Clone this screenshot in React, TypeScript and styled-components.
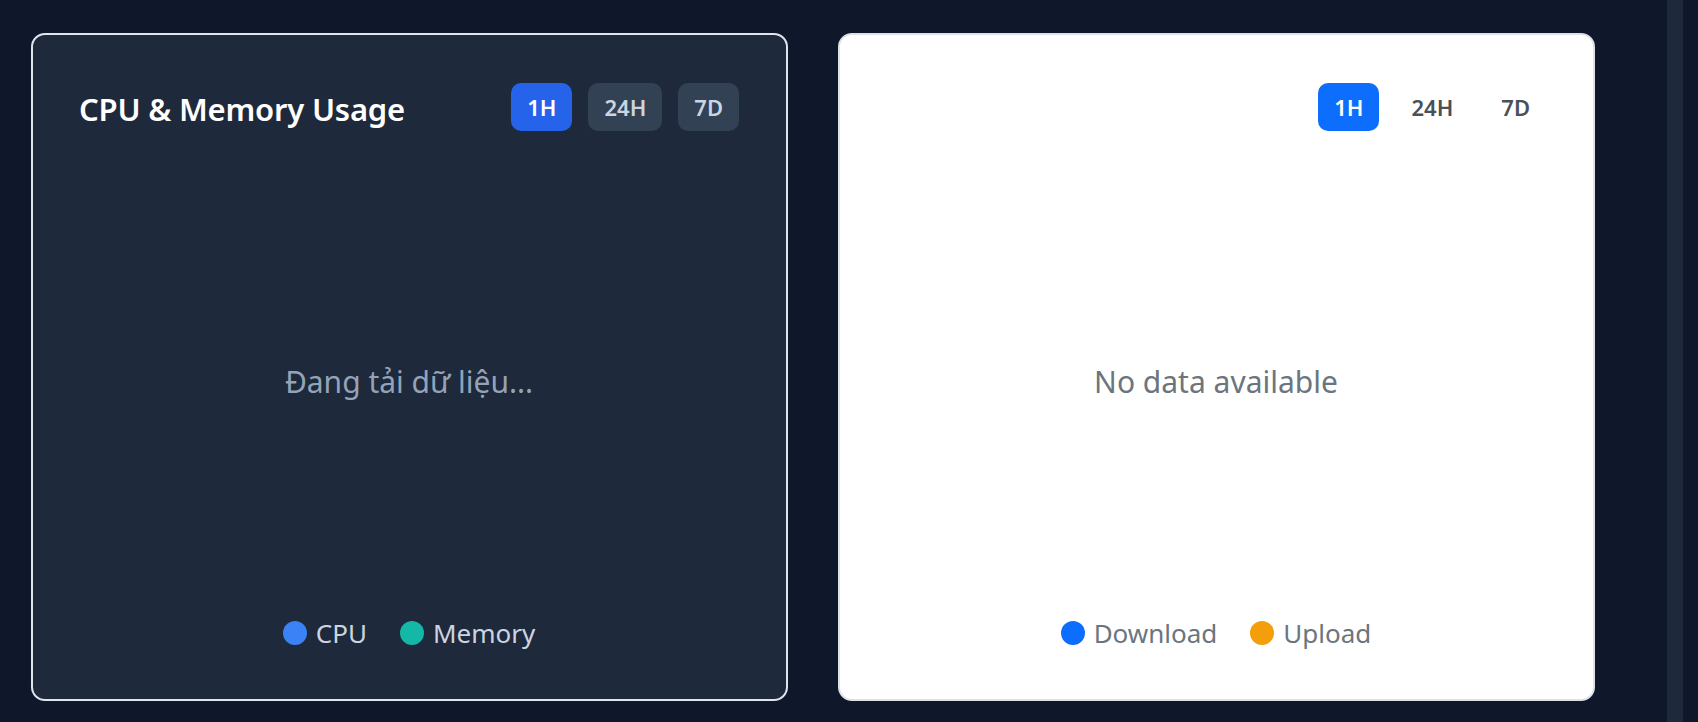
import React from "react";
import styled, { createGlobalStyle } from "styled-components";

const Global = createGlobalStyle`
  html, body { margin: 0; padding: 0; background: #0f172a; }
  body { font-family: "Noto Sans", "Open Sans", sans-serif; overflow: hidden; }
  * { box-sizing: border-box; }
`;

const Page = styled.div`
  display: flex;
  width: 1698px;
  height: 722px;
  background: #0f172a;
`;

const Main = styled.main`
  flex: 1;
  display: grid;
  grid-template-columns: 1fr 1fr;
  column-gap: 50px;
  padding: 33px 72px 21px 31px;
`;

const Track = styled.div`
  width: 16px;
  background: #1e293b;
`;

const Edge = styled.div`
  width: 15px;
  background: #0f172a;
`;

const Card = styled.section<{ $dark?: boolean }>`
  display: flex;
  flex-direction: column;
  height: 668px;
  padding: 48px 47px 46px 46px;
  border-radius: 14px;
  border: 2px solid ${(p) => (p.$dark ? "#dfe5ee" : "#dee2e6")};
  background: ${(p) => (p.$dark ? "#1e293b" : "#ffffff")};
`;

const Header = styled.div`
  display: flex;
  align-items: center;
  justify-content: space-between;
  height: 48px;
`;

const Title = styled.h2`
  margin: 0;
  padding-top: 4px;
  font-size: 31px;
  font-weight: 600;
  color: #ffffff;
  letter-spacing: -0.2px;
`;

const Ranges = styled.div`
  display: flex;
  gap: 16px;
  margin-left: auto;
`;

const RangeButton = styled.button<{ $dark?: boolean; $active?: boolean }>`
  height: 48px;
  padding: 0 16px;
  border: none;
  border-radius: 10px;
  font-family: inherit;
  font-size: 22px;
  font-weight: 600;
  cursor: pointer;
  background: ${(p) =>
    p.$active ? (p.$dark ? "#2563eb" : "#0d6efd") : p.$dark ? "#334155" : "transparent"};
  color: ${(p) => (p.$active ? "#ffffff" : p.$dark ? "#cbd5e1" : "#495057")};
`;

const ChartArea = styled.div`
  flex: 1;
  display: flex;
  align-items: center;
  justify-content: center;
  margin-top: 20px;
`;

const Message = styled.p<{ $dark?: boolean }>`
  margin: 0;
  font-size: 30px;
  color: ${(p) => (p.$dark ? "#94a3b8" : "#6c757d")};
`;

const Legend = styled.div`
  display: flex;
  justify-content: center;
  align-items: center;
  gap: 33px;
  height: 41px;
`;

const LegendItem = styled.span<{ $dark?: boolean }>`
  display: flex;
  align-items: center;
  gap: 9px;
  font-size: 26px;
  color: ${(p) => (p.$dark ? "#cbd5e1" : "#6c757d")};
`;

const Dot = styled.span<{ $color: string }>`
  width: 24px;
  height: 24px;
  border-radius: 50%;
  background: ${(p) => p.$color};
`;

const ranges = ["1H", "24H", "7D"];

type Series = { label: string; color: string };

function ChartCard({
  dark,
  title,
  message,
  series,
}: {
  dark?: boolean;
  title?: string;
  message: string;
  series: Series[];
}) {
  return (
    <Card $dark={dark}>
      <Header>
        {title && <Title>{title}</Title>}
        <Ranges>
          {ranges.map((r, i) => (
            <RangeButton key={r} $dark={dark} $active={i === 0}>
              {r}
            </RangeButton>
          ))}
        </Ranges>
      </Header>
      <ChartArea>
        <Message $dark={dark}>{message}</Message>
      </ChartArea>
      <Legend>
        {series.map((s) => (
          <LegendItem key={s.label} $dark={dark}>
            <Dot $color={s.color} />
            {s.label}
          </LegendItem>
        ))}
      </Legend>
    </Card>
  );
}

export default function App() {
  return (
    <Page>
      <Global />
      <Main>
        <ChartCard
          dark
          title="CPU & Memory Usage"
          message="Đang tải dữ liệu..."
          series={[
            { label: "CPU", color: "#3b82f6" },
            { label: "Memory", color: "#14b8a6" },
          ]}
        />
        <ChartCard
          message="No data available"
          series={[
            { label: "Download", color: "#0d6efd" },
            { label: "Upload", color: "#f59e0b" },
          ]}
        />
      </Main>
      <Track />
      <Edge />
    </Page>
  );
}
